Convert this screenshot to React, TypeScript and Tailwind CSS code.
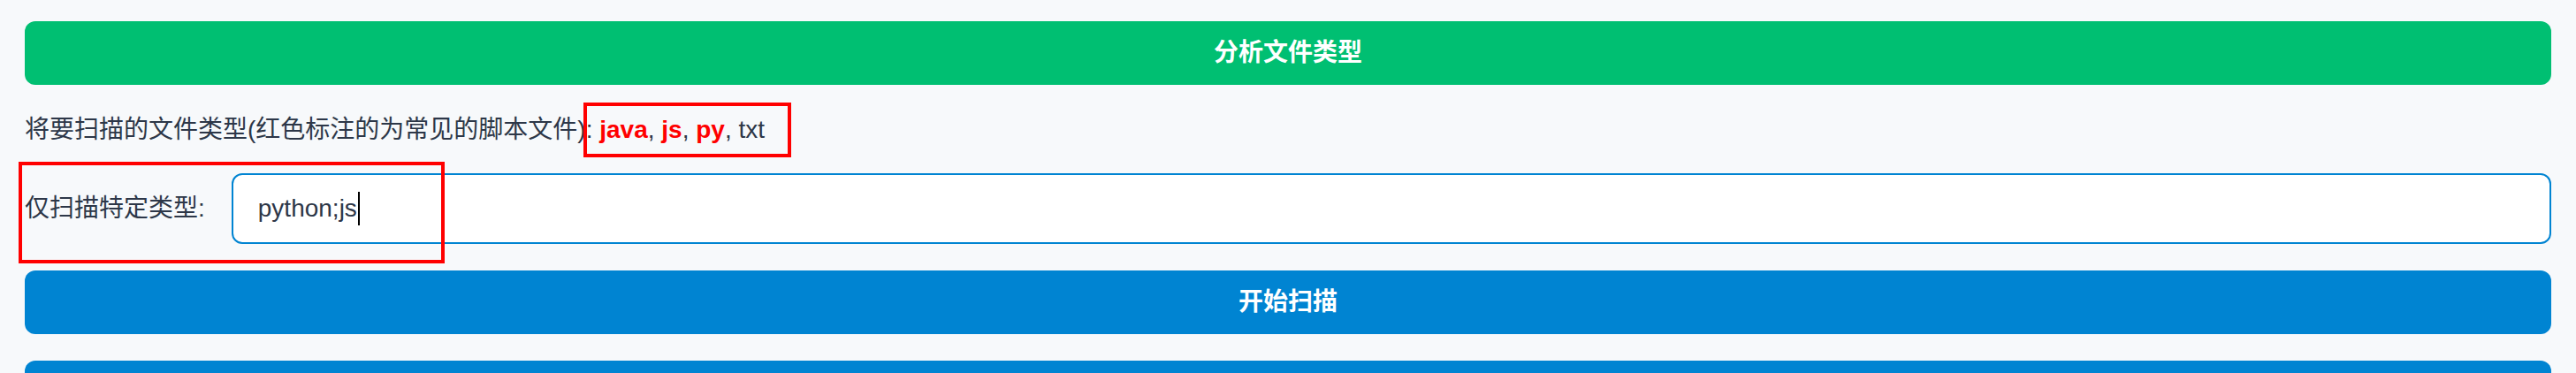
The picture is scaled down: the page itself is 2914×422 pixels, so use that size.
import React from 'react';

const fontStack = { fontFamily: '"Liberation Sans", "Noto Sans CJK SC", sans-serif' };

const App: React.FC = () => {
  return (
    <div
      className="relative min-h-[422px] bg-[#f7f9fb] px-[28px] pt-[24px] text-[28px] text-[#2d3748]"
      style={fontStack}
    >
      {/* 分析按钮 */}
      <button
        type="button"
        className="flex h-[72px] w-full items-center justify-center rounded-[12px] bg-[#00bf72] text-[28px] font-bold text-white"
      >
        分析文件类型
      </button>

      {/* 文件类型说明 */}
      <div className="mt-[31px] h-[40px] leading-[40px] whitespace-nowrap">
        将要扫描的文件类型(红色标注的为常见的脚本文件):{' '}
        <span className="font-bold text-[#ff0000]">java</span>,{' '}
        <span className="font-bold text-[#ff0000]">js</span>,{' '}
        <span className="font-bold text-[#ff0000]">py</span>, txt
      </div>

      {/* 仅扫描特定类型 */}
      <div className="mt-[29px] flex h-[80px] items-center">
        <label className="mr-[30px] whitespace-nowrap">仅扫描特定类型:</label>
        <div className="flex h-[80px] flex-1 items-center rounded-[12px] border-2 border-[#0084d2] bg-white px-[28px]">
          <span>python;js</span>
          <span className="ml-[1px] inline-block h-[38px] w-[2px] bg-black" />
        </div>
      </div>

      <button
        type="button"
        className="mt-[30px] flex h-[72px] w-full items-center justify-center rounded-[12px] bg-[#0084d2] text-[28px] font-bold text-white"
      >
        开始扫描
      </button>

      <button
        type="button"
        className="mt-[30px] flex h-[72px] w-full items-center justify-center rounded-[12px] bg-[#0084d2] text-[28px] font-bold text-white"
      />

      {/* 标注框 */}
      <div className="pointer-events-none absolute left-[660px] top-[116px] h-[62px] w-[235px] border-[4px] border-[#ff0000]" />
      <div className="pointer-events-none absolute left-[21px] top-[183px] h-[115px] w-[482px] border-[4px] border-[#ff0000]" />
    </div>
  );
};

export default App;
